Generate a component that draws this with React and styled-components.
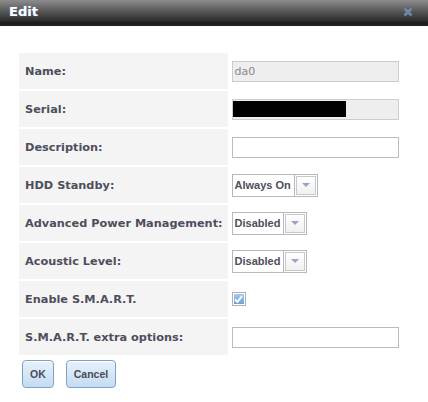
import styled, { createGlobalStyle } from "styled-components";

const Global = createGlobalStyle`
  body {
    margin: 0;
    background: #fff;
    font-family: "DejaVu Sans", Verdana, sans-serif;
  }
`;

const Dialog = styled.div`
  width: 428px;
  height: 402px;
  background: #fff;
`;

const TitleBar = styled.div`
  height: 26px;
  display: flex;
  align-items: center;
  justify-content: space-between;
  padding: 0 9px 3px 9px;
  box-sizing: border-box;
  background: linear-gradient(#8c8c8c 0%, #555 45%, #262626 85%, #1c1c1c 86%, #222 100%);
`;

const Title = styled.span`
  color: #fff;
  font-weight: bold;
  font-size: 13px;
  text-shadow: 0 0 1px #7aa7e0;
`;

const Close = styled.svg`
  width: 10px;
  height: 10px;
  margin-right: 6px;
`;

const Body = styled.div`
  padding: 25px 0 0 17px;
`;

const Table = styled.table`
  border-spacing: 2px;
  border-collapse: separate;
`;

const Label = styled.td`
  width: 194px;
  height: 36px;
  padding: 0 5px 0 6px;
  background: #f4f4f4;
  color: #4e4e5c;
  font-weight: bold;
  font-size: 11.3px;
  white-space: nowrap;
`;

const Field = styled.td`
  padding: 0 0 0 2px;
  vertical-align: middle;
`;

const TextInput = styled.div`
  width: 167px;
  height: 21px;
  box-sizing: border-box;
  border: 1px solid ${(p) => (p.$readOnly ? "#ccc" : "#b9bcc4")};
  background: ${(p) => (p.$readOnly ? "#eee" : "#fff")};
  color: #888;
  font-size: 11px;
  display: flex;
  align-items: center;
  padding-left: 2px;
`;

const Redacted = styled.div`
  width: 113px;
  height: 16px;
  background: #000;
  margin-left: -2px;
`;

const Select = styled.div`
  display: inline-flex;
  height: 23px;
  box-sizing: border-box;
  border: 1px solid #b4b8c4;
  background: #fff;
`;

const SelectText = styled.span`
  display: flex;
  align-items: center;
  padding: 0 3px 0 2px;
  font-family: "Liberation Sans", Arial, sans-serif;
  font-size: 11px;
  font-weight: bold;
  color: #4e4e5c;
  border-right: 1px solid #b4b8c4;
`;

const Arrow = styled.span`
  width: 18px;
  display: flex;
  align-items: center;
  justify-content: center;
  border: 1px solid #c8c8c8;
  margin: 1px;
  background: linear-gradient(#fff, #f0f0f0);
  &::after {
    content: "";
    border-left: 4px solid transparent;
    border-right: 4px solid transparent;
    border-top: 4px solid #98a4c0;
  }
`;

const Check = styled.div`
  width: 14px;
  height: 14px;
  box-sizing: border-box;
  border: 1px solid #aab0bc;
  padding: 1px;
  background: #fff;
`;

const CheckInner = styled.div`
  width: 100%;
  height: 100%;
  background: linear-gradient(#a8cbe8, #6fa0d0);
  display: flex;
  align-items: center;
  justify-content: center;
`;

const Buttons = styled.div`
  display: flex;
  gap: 12px;
  padding: 3px 0 0 5px;
`;

const Button = styled.button`
  height: 28px;
  padding: 0 ${(p) => p.$pad}px;
  border: 1px solid #7f9fc4;
  border-radius: 4px;
  background: linear-gradient(#e6f1fb, #c4dcf2);
  color: #4a4a58;
  font-family: "Liberation Sans", Arial, sans-serif;
  font-weight: bold;
  font-size: 10.5px;
  box-shadow: inset 0 1px 0 #fff;
`;

function SelectBox({ value }) {
  return (
    <Select>
      <SelectText>{value}</SelectText>
      <Arrow />
    </Select>
  );
}

export default function App() {
  return (
    <Dialog>
      <Global />
      <TitleBar>
        <Title>Edit</Title>
        <Close viewBox="0 0 10 10">
          <path d="M1.5 1.5L8.5 8.5M8.5 1.5L1.5 8.5" stroke="#6f8aa8" strokeWidth="2.6" />
        </Close>
      </TitleBar>
      <Body>
        <Table>
          <tbody>
            <tr>
              <Label>Name:</Label>
              <Field>
                <TextInput $readOnly>da0</TextInput>
              </Field>
            </tr>
            <tr>
              <Label>Serial:</Label>
              <Field>
                <TextInput $readOnly>
                  <Redacted />
                </TextInput>
              </Field>
            </tr>
            <tr>
              <Label>Description:</Label>
              <Field>
                <TextInput />
              </Field>
            </tr>
            <tr>
              <Label>HDD Standby:</Label>
              <Field>
                <SelectBox value="Always On" />
              </Field>
            </tr>
            <tr>
              <Label>Advanced Power Management:</Label>
              <Field>
                <SelectBox value="Disabled" />
              </Field>
            </tr>
            <tr>
              <Label>Acoustic Level:</Label>
              <Field>
                <SelectBox value="Disabled" />
              </Field>
            </tr>
            <tr>
              <Label>Enable S.M.A.R.T.</Label>
              <Field>
                <Check>
                  <CheckInner>
                    <svg width="9" height="8" viewBox="0 0 9 8">
                      <path d="M1 4.5L3.5 7L8 1" stroke="#fff" strokeWidth="1.8" fill="none" />
                    </svg>
                  </CheckInner>
                </Check>
              </Field>
            </tr>
            <tr>
              <Label>S.M.A.R.T. extra options:</Label>
              <Field>
                <TextInput />
              </Field>
            </tr>
          </tbody>
        </Table>
        <Buttons>
          <Button $pad={7}>OK</Button>
          <Button $pad={7}>Cancel</Button>
        </Buttons>
      </Body>
    </Dialog>
  );
}
